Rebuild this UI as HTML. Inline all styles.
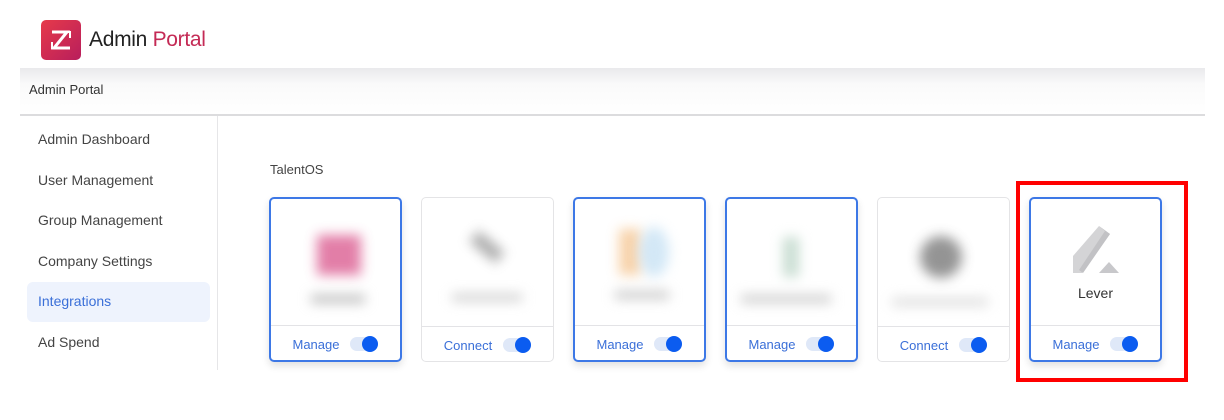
<!DOCTYPE html>
<html><head><meta charset="utf-8"><style>
*{margin:0;padding:0;box-sizing:border-box}
body{width:1224px;height:420px;background:#fff;font-family:"Liberation Sans",sans-serif;position:relative;overflow:hidden}
.abs{position:absolute}
.logo{left:41px;top:20px;width:40px;height:40px;border-radius:5px;background:linear-gradient(135deg,#e63a4a,#b81e5c)}
.title{left:89px;top:28px;font-size:21px;color:#222;letter-spacing:-0.3px}
.title span{color:#c42a55}
.hdr{left:20px;top:68px;width:1185px;height:48px;background:linear-gradient(#e9e9ec,#fafafa 35%,#fff);border-bottom:2px solid #dcdcde}
.hdr div{position:absolute;left:9px;top:14px;font-size:13px;color:#333}
.side{left:20px;top:116px;width:198px;height:254px;border-right:1px solid #e6e6e8}
.nav{position:absolute;left:18px;font-size:14px;color:#444}
.sel{left:27px;top:282px;width:183px;height:40px;background:#eef3fd;border-radius:6px}
.tos{left:270px;top:162px;font-size:13px;color:#444}
.card{position:absolute;top:197px;width:133px;height:165px;border-radius:5px;background:#fff}
.on{border:2px solid #3d78e6;box-shadow:0 4px 8px rgba(0,0,0,.12)}
.off{border:1px solid #e4e4e6}
.foot{position:absolute;left:0;right:0;bottom:0;height:35px;border-top:1px solid #e3e3e6;display:flex;justify-content:center;align-items:center;gap:11px;padding-top:2px}
.foot span{font-size:13px;color:#3a6fd8}
.tg{position:relative;width:28px;height:14px;border-radius:7px;background:#dfe8f8}
.tg:after{content:"";position:absolute;right:0;top:-1px;width:16px;height:16px;border-radius:50%;background:#0b5cf0}
.bl{position:absolute;filter:blur(6px)}
.red{left:1016px;top:181px;width:172px;height:201px;border:4px solid #f00}
</style></head><body>
<div class="abs logo"><svg width="40" height="40" viewBox="0 0 40 40"><path d="M11 12h15L13 28h16" stroke="#fff" stroke-width="3" fill="none"/><path d="M22 12h7v6M11 22v6h7" stroke="#fff" stroke-width="2" fill="none"/></svg></div>
<div class="abs title">Admin <span>Portal</span></div>
<div class="abs hdr"><div>Admin Portal</div></div>
<div class="abs sel"></div>
<div class="abs side">
<div class="nav" style="top:15px">Admin Dashboard</div>
<div class="nav" style="top:56px">User Management</div>
<div class="nav" style="top:96px">Group Management</div>
<div class="nav" style="top:137px">Company Settings</div>
<div class="nav" style="top:177px;color:#3a6fd8">Integrations</div>
<div class="nav" style="top:218px">Ad Spend</div>
</div>
<div class="abs tos">TalentOS</div>

<div class="card on" style="left:269px"><div class="bl" style="left:46px;top:36px;width:44px;height:40px;background:#d9538a;opacity:.75"></div><div class="bl" style="left:40px;top:96px;width:54px;height:8px;background:#bbb"></div><div class="foot"><span>Manage</span><div class="tg"></div></div></div>
<div class="card off" style="left:421px"><div class="bl" style="left:48px;top:42px;width:34px;height:14px;background:#888;transform:rotate(40deg);opacity:.7"></div><div class="bl" style="left:30px;top:96px;width:70px;height:7px;background:#ccc"></div><div class="foot"><span>Connect</span><div class="tg"></div></div></div>
<div class="card on" style="left:573px"><div class="bl" style="left:44px;top:30px;width:22px;height:46px;background:#f6c896;opacity:.8"></div><div class="bl" style="left:64px;top:28px;width:30px;height:50px;border-radius:50%;background:#c8e2f4;opacity:.8"></div><div class="bl" style="left:40px;top:92px;width:54px;height:8px;background:#c8c8c8"></div><div class="foot"><span>Manage</span><div class="tg"></div></div></div>
<div class="card on" style="left:725px"><div class="bl" style="left:56px;top:38px;width:16px;height:40px;background:#c9ddd2"></div><div class="bl" style="left:14px;top:96px;width:90px;height:8px;background:#ccc"></div><div class="foot"><span>Manage</span><div class="tg"></div></div></div>
<div class="card off" style="left:877px"><div class="bl" style="left:42px;top:38px;width:42px;height:42px;border-radius:50%;background:#7a7a7a;opacity:.8"></div><div class="bl" style="left:14px;top:100px;width:96px;height:8px;background:#ddd"></div><div class="foot"><span>Connect</span><div class="tg"></div></div></div>
<div class="card on" style="left:1029px">
<svg style="position:absolute;left:30px;top:15px" width="70" height="65" viewBox="1059 212 70 65"><path d="M1071 254L1097 224L1108 232L1080 271L1071 271Z" fill="#d4d4d6"/><path d="M1097 224L1108 232L1081 271L1077 268L1103 229Z" fill="#c2c2c5"/><path d="M1097 271L1117 271L1107 260Z" fill="#c8c8cb"/></svg>
<div style="position:absolute;left:0;right:0;top:86px;text-align:center;font-size:14px;color:#333">Lever</div>
<div class="foot"><span>Manage</span><div class="tg"></div></div></div>
<div class="abs red"></div>
</body></html>
